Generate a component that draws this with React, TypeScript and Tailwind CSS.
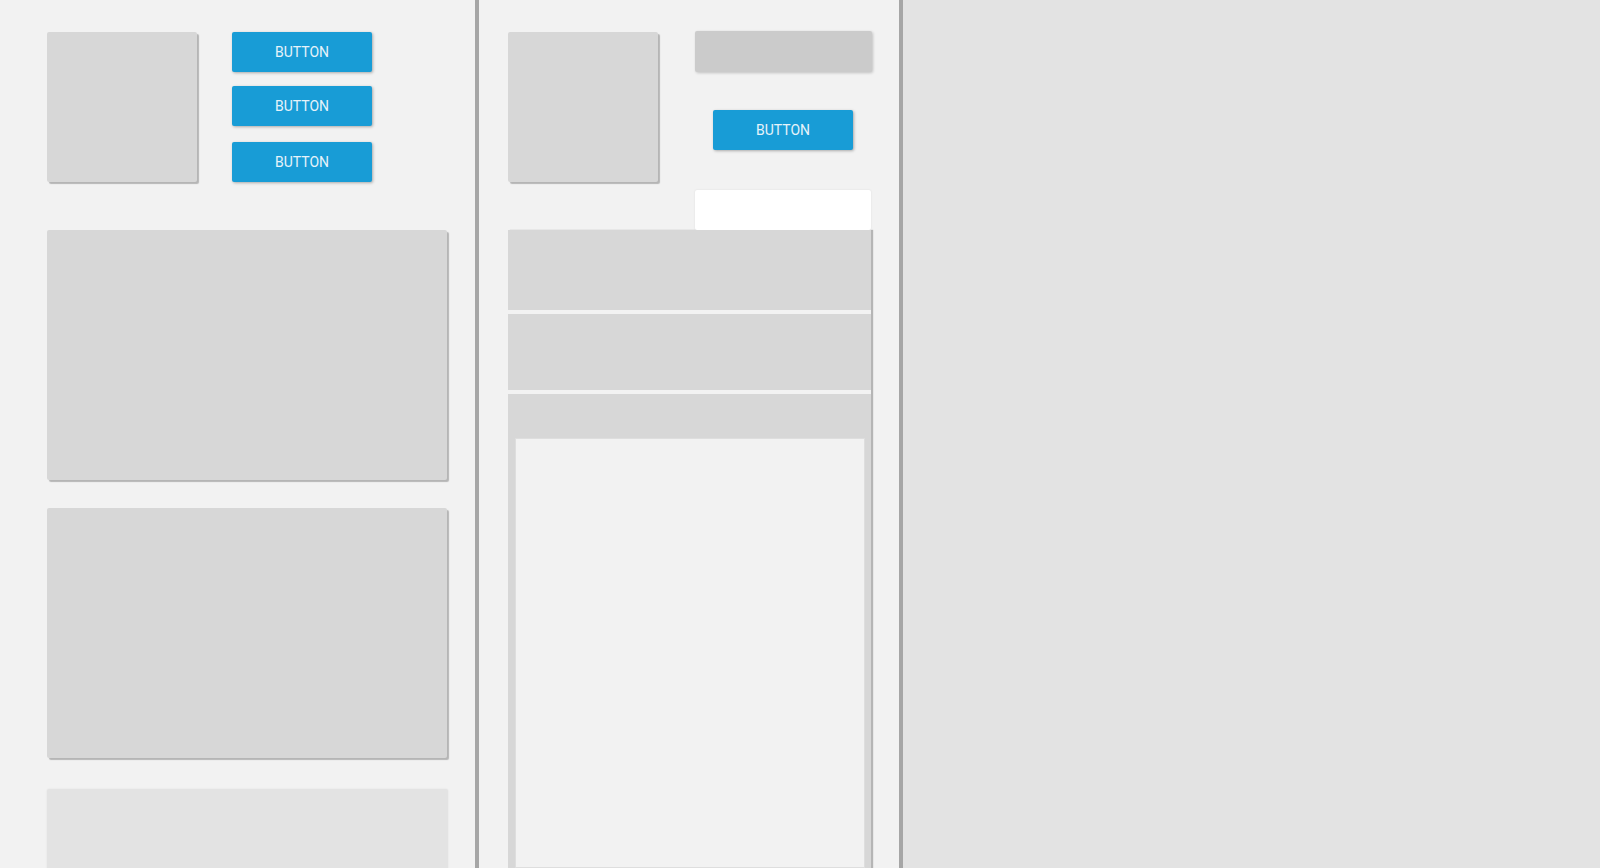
import React from 'react';

// 간단한 와이어프레임 레이아웃: 왼쪽 패널 / 가운데 패널 / 오른쪽 빈 영역

function Btn({ className = '' }: { className?: string }) {
  return (
    <button
      className={`w-[140px] h-[40px] rounded-[2px] bg-[#189cd6] text-[#e6f3fa] text-[14px] shadow-[1px_1px_3px_rgba(0,0,0,0.3)] ${className}`}
      style={{ fontFamily: 'Roboto, "Liberation Sans", sans-serif' }}
    >
      BUTTON
    </button>
  );
}

function Card({ className = '' }: { className?: string }) {
  return (
    <div
      className={`rounded-[2px] bg-[#d7d7d7] shadow-[2px_2px_1px_rgba(0,0,0,0.25)] ${className}`}
    />
  );
}

export default function App() {
  return (
    <div className="flex h-[868px] w-[1600px] overflow-hidden bg-[#e3e3e3]">
      {/* 왼쪽 패널 */}
      <div className="w-[475px] shrink-0 bg-[#f2f2f2] pl-[47px] pt-[32px]">
        <div className="flex gap-[35px]">
          <Card className="w-[150px] h-[150px]" />
          <div className="flex flex-col">
            <Btn />
            <Btn className="mt-[14px]" />
            <Btn className="mt-[16px]" />
          </div>
        </div>
        <Card className="mt-[48px] w-[400px] h-[250px]" />
        <Card className="mt-[28px] w-[400px] h-[250px]" />
        <div className="mt-[31px] w-[401px] h-[120px] rounded-[2px] bg-[#e3e3e3] shadow-[0_0_2px_rgba(0,0,0,0.08)]" />
      </div>
      <div className="w-[4px] shrink-0 bg-[#a6a6a6]" />

      {/* 가운데 패널 */}
      <div className="w-[420px] shrink-0 bg-[#f2f2f2] pl-[29px] pt-[31px]">
        <div className="flex gap-[37px]">
          <Card className="mt-[1px] w-[150px] h-[150px]" />
          <div className="flex w-[177px] flex-col">
            <div className="h-[41px] w-[177px] rounded-[2px] bg-[#cbcbcb] shadow-[1px_1px_3px_rgba(0,0,0,0.2)]" />
            <Btn className="mt-[38px] ml-[18px]" />
            <div className="mt-[40px] h-[40px] w-[176px] rounded-[2px] bg-white shadow-[0_0_2px_rgba(0,0,0,0.1)]" />
          </div>
        </div>
        {/* 리스트 */}
        <div className="flex w-[363px] flex-col gap-[4px] shadow-[2px_0_1px_rgba(0,0,0,0.25)]">
          <div className="h-[80px] bg-[#d7d7d7]" />
          <div className="h-[76px] bg-[#d7d7d7]" />
          <div className="h-[480px] bg-[#d7d7d7] pl-[7px] pr-[6px] pt-[44px]">
            <div className="h-[430px] border border-[#dedede] bg-[#f2f2f2]" />
          </div>
        </div>
      </div>
      <div className="w-[4px] shrink-0 bg-[#a6a6a6]" />

      {/* 오른쪽 영역 */}
      <div className="flex-1 bg-[#e3e3e3]" />
    </div>
  );
}
